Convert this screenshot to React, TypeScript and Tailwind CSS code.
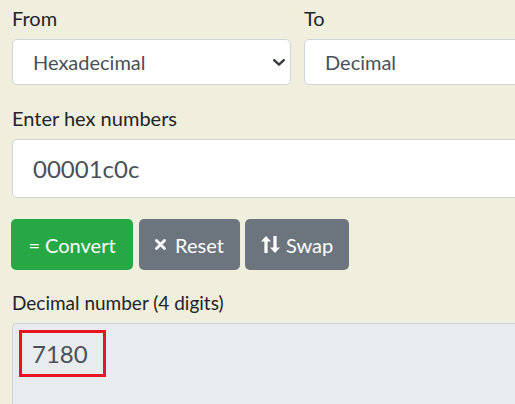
function Chevron() {
  return (
    <svg width="12" height="7" viewBox="0 0 12 7" fill="none">
      <path d="M1.2 1.2 L6 5.6 L10.8 1.2" stroke="#343a40" strokeWidth="2.4" strokeLinecap="round" strokeLinejoin="round" />
    </svg>
  );
}

function TimesIcon() {
  return (
    <svg width="11" height="11" viewBox="0 0 11 11">
      <path d="M1.5 1.5 L9.5 9.5 M9.5 1.5 L1.5 9.5" stroke="white" strokeWidth="2.8" strokeLinecap="round" />
    </svg>
  );
}

function SwapIcon() {
  return (
    <svg width="19" height="17" viewBox="0 0 19 17" fill="white">
      {/* up arrow */}
      <path d="M5 0 L10 5.5 L6.6 5.5 L6.6 17 L3.4 17 L3.4 5.5 L0 5.5 Z" />
      {/* down arrow */}
      <path d="M14 17 L9 11.5 L12.4 11.5 L12.4 0 L15.6 0 L15.6 11.5 L19 11.5 Z" />
    </svg>
  );
}

function SelectBox({ value }: { value: string }) {
  return (
    <div className="flex h-[46px] w-[279px] items-center justify-between rounded-[5px] border border-[#ced4da] bg-white pl-5 pr-[5px] text-[20px] text-[#495057]">
      <span>{value}</span>
      <Chevron />
    </div>
  );
}

export default function App() {
  return (
    <div className="h-screen w-full overflow-hidden bg-[#f0eedc] font-['Lato',sans-serif]">
      <div className="w-[620px] pl-3 pt-[3px]">
        {/* from / to */}
        <div className="flex gap-[13px]">
          <div>
            <label className="mb-[6px] block text-[20px] leading-[30px] text-[#212529]">From</label>
            <SelectBox value="Hexadecimal" />
          </div>
          <div>
            <label className="mb-[6px] block text-[20px] leading-[30px] text-[#212529]">To</label>
            <SelectBox value="Decimal" />
          </div>
        </div>

        {/* input */}
        <label className="mb-[6px] mt-[18px] block text-[20px] leading-[30px] text-[#212529]">Enter hex numbers</label>
        <div className="flex h-[59px] items-center rounded-[5px] border border-[#ced4da] bg-white pl-5 text-[24px] text-[#495057]">
          00001c0c
        </div>

        {/* buttons */}
        <div className="-ml-px mt-[21px] flex text-[20px] text-white">
          <button className="flex h-[51px] w-[122px] items-center justify-center rounded-[5px] bg-[#28a745]">
            = Convert
          </button>
          <button className="ml-[6px] flex h-[51px] w-[101px] items-center justify-center gap-[9px] rounded-[5px] bg-[#6c757d]">
            <TimesIcon />
            Reset
          </button>
          <button className="ml-[5px] flex h-[51px] w-[104px] items-center justify-center gap-[6px] rounded-[5px] bg-[#6c757d]">
            <SwapIcon />
            Swap
          </button>
        </div>

        {/* result */}
        <label className="mb-[5px] mt-[18px] block text-[19px] leading-[30px] text-[#212529]">Decimal number (4 digits)</label>
        <div className="relative h-[81px] rounded-tl-[5px] border-l border-t border-[#ced4da] bg-[#e9ecef] pl-[19px] pt-[12px] text-[24px] leading-[36px] text-[#495057]">
          7180
          <div className="absolute left-[6px] top-[6px] h-[47px] w-[87px] border-[3px] border-[#e8141f]" />
        </div>
      </div>
    </div>
  );
}
